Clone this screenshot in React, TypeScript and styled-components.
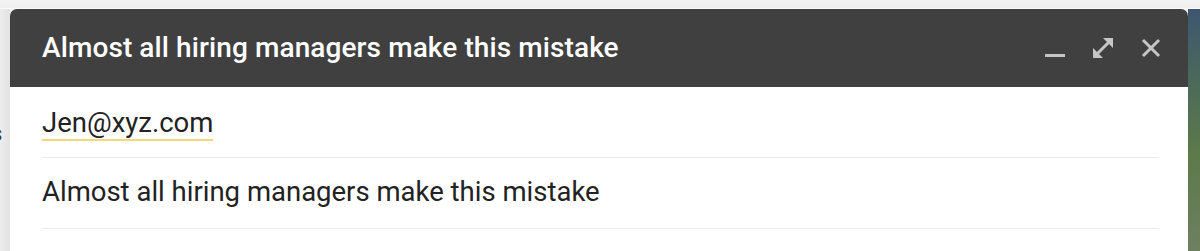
import React from "react";
import styled, { createGlobalStyle } from "styled-components";

const Global = createGlobalStyle`
  html, body { margin: 0; padding: 0; }
  body { width: 1200px; height: 251px; overflow: hidden; background: #ececec; font-family: Roboto, "Noto Sans", sans-serif; }
`;

const Page = styled.div`
  width: 1200px;
  height: 251px;
  display: grid;
  grid-template-columns: 10px 1178px 12px;
  grid-template-rows: 9px 242px;
  background: #f1f1f1;
`;

const TopStrip = styled.div`
  grid-column: 1 / 4;
  background: linear-gradient(#f4f4f4, #eeeeee);
  border-bottom: 1px solid #fafafa;
`;

const LeftStrip = styled.div`
  background: linear-gradient(90deg, #ededed, #e2e2e2);
  position: relative;
  font-size: 22px;
  color: #333;
  overflow: hidden;
`;

const Fragment = styled.span<{ $top: number }>`
  position: absolute;
  left: -9px;
  top: ${(p) => p.$top}px;
`;

const RightStrip = styled.div`
  background: linear-gradient(180deg, #3d5670 0%, #4b6a5a 30%, #5c7a4a 60%, #6d8060 100%);
`;

const Dialog = styled.div`
  display: flex;
  flex-direction: column;
  background: #fff;
  border-radius: 7px 7px 0 0;
  overflow: hidden;
`;

const Header = styled.div`
  height: 78px;
  background: #404040;
  display: flex;
  align-items: center;
  padding: 0 26px 0 32px;
  box-sizing: border-box;
`;

const Title = styled.div`
  flex: 1;
  color: #fff;
  font-size: 28px;
  font-weight: 500;
  letter-spacing: 0.1px;
  padding-bottom: 1px;
  white-space: nowrap;
`;

const Icons = styled.div`
  display: flex;
  align-items: center;
  gap: 26px;
`;

const IconBox = styled.div`
  width: 22px;
  height: 22px;
  display: flex;
  align-items: center;
  justify-content: center;
`;

const Body = styled.div`
  padding: 0 29px 0 32px;
  display: flex;
  flex-direction: column;
`;

const Row = styled.div`
  height: 70px;
  display: flex;
  align-items: center;
  border-bottom: 1px solid #ebebeb;
  font-size: 27.5px;
  color: #222;
  white-space: nowrap;
`;

const Email = styled.span`
  border-bottom: 2px solid #f3d77a;
  line-height: 32px;
  margin-top: 4px;
`;

const Subject = styled.span`
  padding-bottom: 4px;
`;

const Minimize = () => (
  <svg width="22" height="22" viewBox="0 0 22 22">
    <rect x="1" y="17" width="20" height="3" fill="#c6c6c6" />
  </svg>
);

const Expand = () => (
  <svg width="22" height="22" viewBox="0 0 22 22">
    <path d="M5 17 L17 5" stroke="#c6c6c6" strokeWidth="3" />
    <path d="M11 1 H21 V11 Z" fill="#c6c6c6" />
    <path d="M1 11 V21 H11 Z" fill="#c6c6c6" />
  </svg>
);

const Close = () => (
  <svg width="22" height="22" viewBox="0 0 22 22">
    <path d="M3 3 L19 19 M19 3 L3 19" stroke="#c6c6c6" strokeWidth="3" />
  </svg>
);

export default function App() {
  return (
    <>
      <Global />
      <Page>
        <TopStrip />
        <LeftStrip>
          <Fragment $top={40}>.</Fragment>
          <Fragment $top={112}>s</Fragment>
        </LeftStrip>
        <Dialog>
          <Header>
            <Title>Almost all hiring managers make this mistake</Title>
            <Icons>
              <IconBox><Minimize /></IconBox>
              <IconBox><Expand /></IconBox>
              <IconBox><Close /></IconBox>
            </Icons>
          </Header>
          <Body>
            <Row>
              <Email>Jen@xyz.com</Email>
            </Row>
            <Row>
              <Subject>Almost all hiring managers make this mistake</Subject>
            </Row>
          </Body>
        </Dialog>
        <RightStrip />
      </Page>
    </>
  );
}
